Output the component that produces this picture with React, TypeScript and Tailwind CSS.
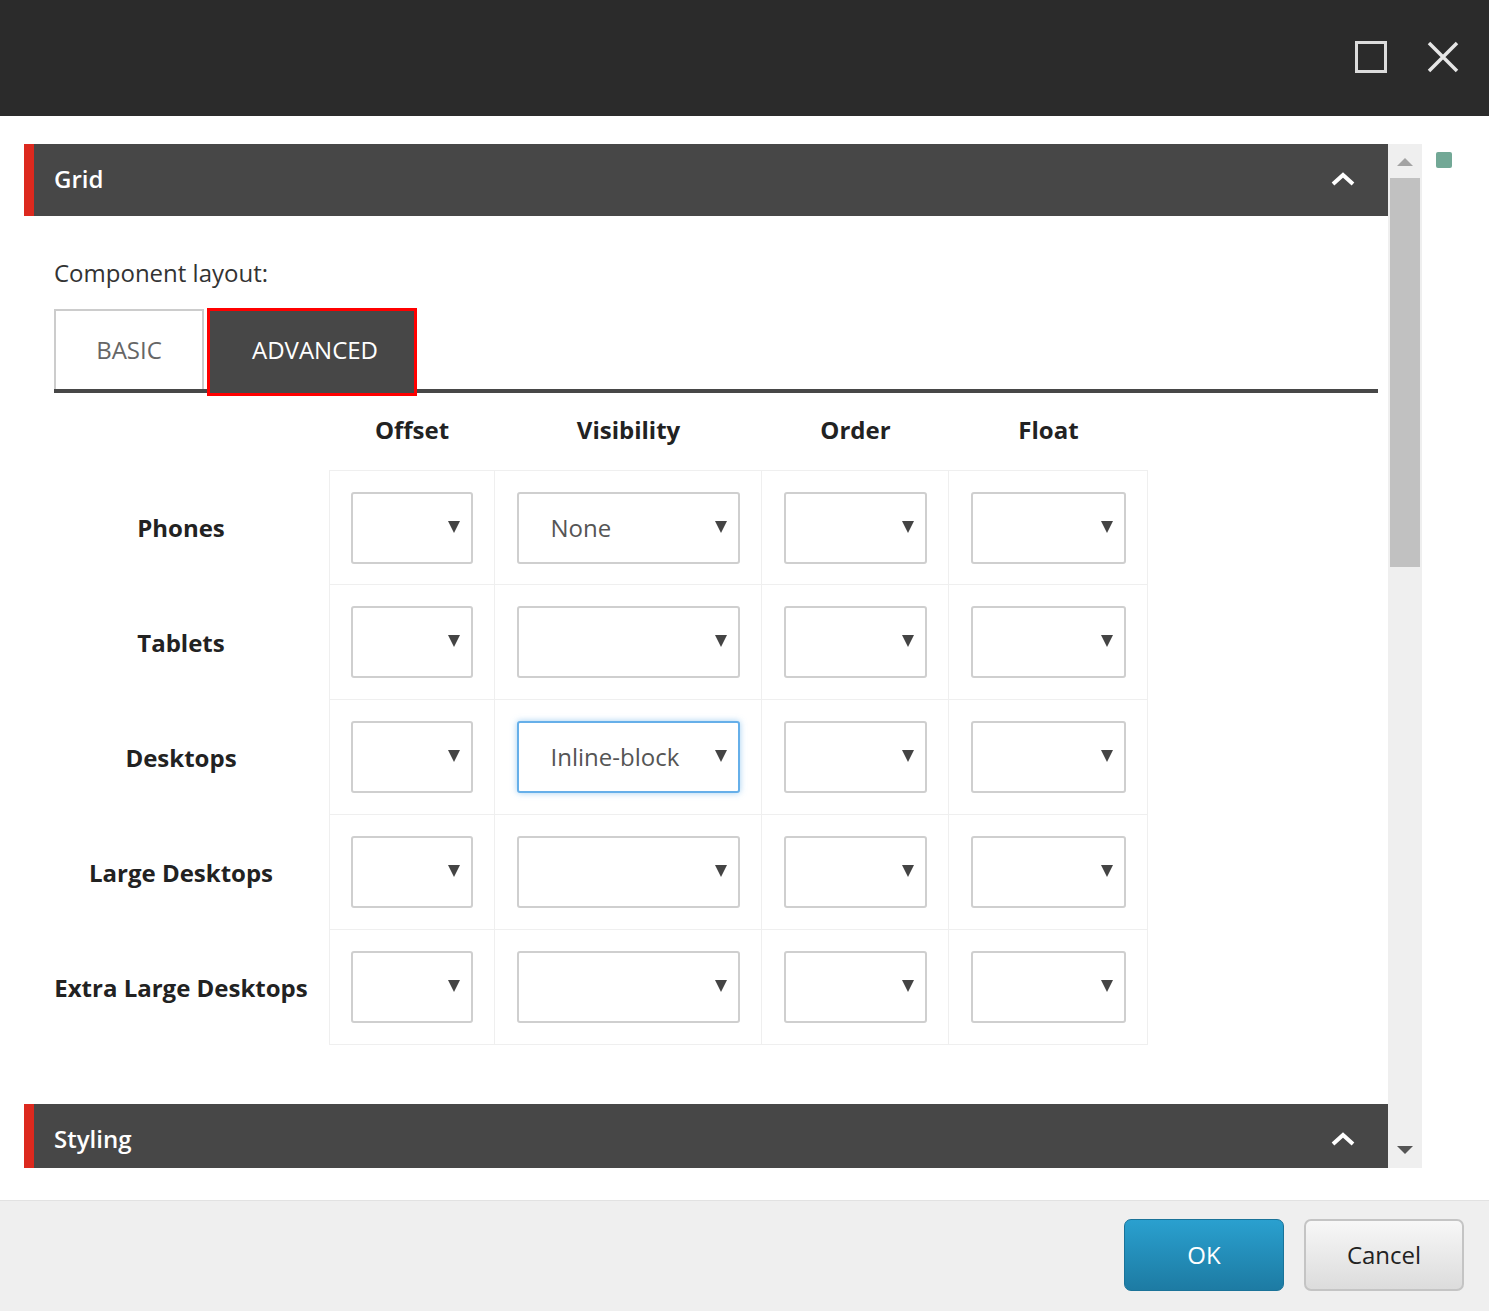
const rows = [
  { label: 'Phones', vis: 'None' },
  { label: 'Tablets', vis: '' },
  { label: 'Desktops', vis: 'Inline-block', focus: true },
  { label: 'Large Desktops', vis: '' },
  { label: 'Extra Large Desktops', vis: '' },
]

const cols = [
  { name: 'Offset', cell: 'w-[166px]', sel: 'w-[122px]' },
  { name: 'Visibility', cell: 'w-[267px]', sel: 'w-[223px]' },
  { name: 'Order', cell: 'w-[187px]', sel: 'w-[143px]' },
  { name: 'Float', cell: 'w-[199px]', sel: 'w-[155px]' },
]

function Select({ width, value, focus }: { width: string; value?: string; focus?: boolean }) {
  return (
    <div
      className={`${width} h-[72px] rounded-[3px] bg-white flex items-center relative ${
        focus ? 'border-2 border-[#66afe9] shadow-[0_0_6px_rgba(102,175,233,0.6)]' : 'border-2 border-[#cfcfcf]'
      }`}
    >
      <span className="pl-[32px] text-[24px] text-[#555]">{value}</span>
      <svg className="absolute right-[11px] top-[27px]" width="12" height="12" viewBox="0 0 12 12">
        <path d="M0 0 H12 L6 12 Z" fill="#444" />
      </svg>
    </div>
  )
}

function Section({ title }: { title: string }) {
  return (
    <div className="h-[72px] shrink-0 bg-[#474747] border-l-[10px] border-[#dc291e] flex items-center justify-between pl-[20px] pr-[32px] pb-[2px]">
      <span className="text-[24px] font-semibold text-white">{title}</span>
      <svg width="26" height="18" viewBox="0 0 26 18">
        <path d="M3 14 L13 5 L23 14" stroke="white" strokeWidth="4" fill="none" />
      </svg>
    </div>
  )
}

export default function App() {
  return (
    <div className="w-[1489px] h-[1311px] flex flex-col bg-white font-['Open_Sans',sans-serif]">
      <div className="h-[116px] shrink-0 bg-[#2b2b2b] flex items-center justify-end gap-[40px] pr-[30px] pb-[3px]">
        <div className="w-[32px] h-[32px] border-[3px] border-[#dcdcdc]" />
        <svg width="32" height="32" viewBox="0 0 32 32">
          <path d="M2 2 L30 30 M30 2 L2 30" stroke="#e6e6e6" strokeWidth="3.5" />
        </svg>
      </div>

      <div className="flex-1 flex pt-[28px] pl-[24px]">
        <div className="w-[1364px] h-[1024px] overflow-hidden flex flex-col">
          <Section title="Grid" />
          <div className="pl-[30px] pr-[10px] pt-[41px] pb-[59px]">
            <div className="text-[24px] text-[#333] leading-[32px]">Component layout:</div>
            <div className="mt-[19px] h-[85px] border-b-4 border-[#474747] flex items-end gap-[3px]">
              <div className="w-[150px] h-[80px] border-2 border-b-0 border-[#cccccc] flex items-center justify-center text-[24px] text-[#666]">
                BASIC
              </div>
              <div className="relative mb-[-7px] w-[210px] h-[88px] bg-[#474747] border-[3px] border-[#ff0000] flex items-center justify-center pl-[6px] pb-[4px] text-[24px] text-white">
                ADVANCED
              </div>
            </div>

            <div className="flex">
              <div className="w-[275px] shrink-0" />
              {cols.map(c => (
                <div key={c.name} className={`${c.cell} h-[77px] flex items-center justify-center pb-[4px] text-[24px] font-bold text-[#222]`}>
                  {c.name}
                </div>
              ))}
            </div>

            {rows.map((r, i) => (
              <div key={r.label} className="flex">
                <div className="w-[254px] shrink-0 flex items-center justify-center text-[24px] font-bold text-[#222]">
                  {r.label}
                </div>
                <div className="w-[21px] shrink-0" />
                {cols.map((c, j) => (
                  <div
                    key={c.name}
                    className={`${c.cell} h-[115px] flex items-center justify-center border-r border-b border-[#efefef] ${
                      i === 0 ? 'border-t' : ''
                    } ${j === 0 ? 'border-l' : ''}`}
                  >
                    <Select width={c.sel} value={j === 1 ? r.vis : ''} focus={j === 1 && r.focus} />
                  </div>
                ))}
              </div>
            ))}
          </div>
          <Section title="Styling" />
        </div>

        <div className="w-[34px] h-[1024px] bg-[#efefef] flex flex-col items-center">
          <svg className="mt-[13px]" width="16" height="10" viewBox="0 0 16 10">
            <path d="M0 9 L8 1 L16 9 Z" fill="#a3a3a3" />
          </svg>
          <div className="mt-[11px] w-[30px] h-[389px] bg-[#c1c1c1]" />
          <div className="flex-1" />
          <svg className="mb-[13px]" width="16" height="10" viewBox="0 0 16 10">
            <path d="M0 1 L16 1 L8 9 Z" fill="#555" />
          </svg>
        </div>

        <div className="ml-[14px] mt-[8px] w-[16px] h-[16px] rounded-[2px] bg-[#72a896]" />
      </div>

      <div className="h-[111px] shrink-0 bg-[#efefef] border-t border-[#e2e2e2] flex items-center justify-end gap-[20px] pr-[25px] pb-[3px]">
        <button className="w-[160px] h-[72px] rounded-[7px] bg-gradient-to-b from-[#2aa0cf] to-[#1d7ba3] border border-[#1a7399] text-white text-[24px]">
          OK
        </button>
        <button className="w-[160px] h-[72px] rounded-[7px] bg-gradient-to-b from-[#f7f7f7] to-[#dcdcdc] border-2 border-[#c4c4c4] text-[#222] text-[24px]">
          Cancel
        </button>
      </div>
    </div>
  )
}
